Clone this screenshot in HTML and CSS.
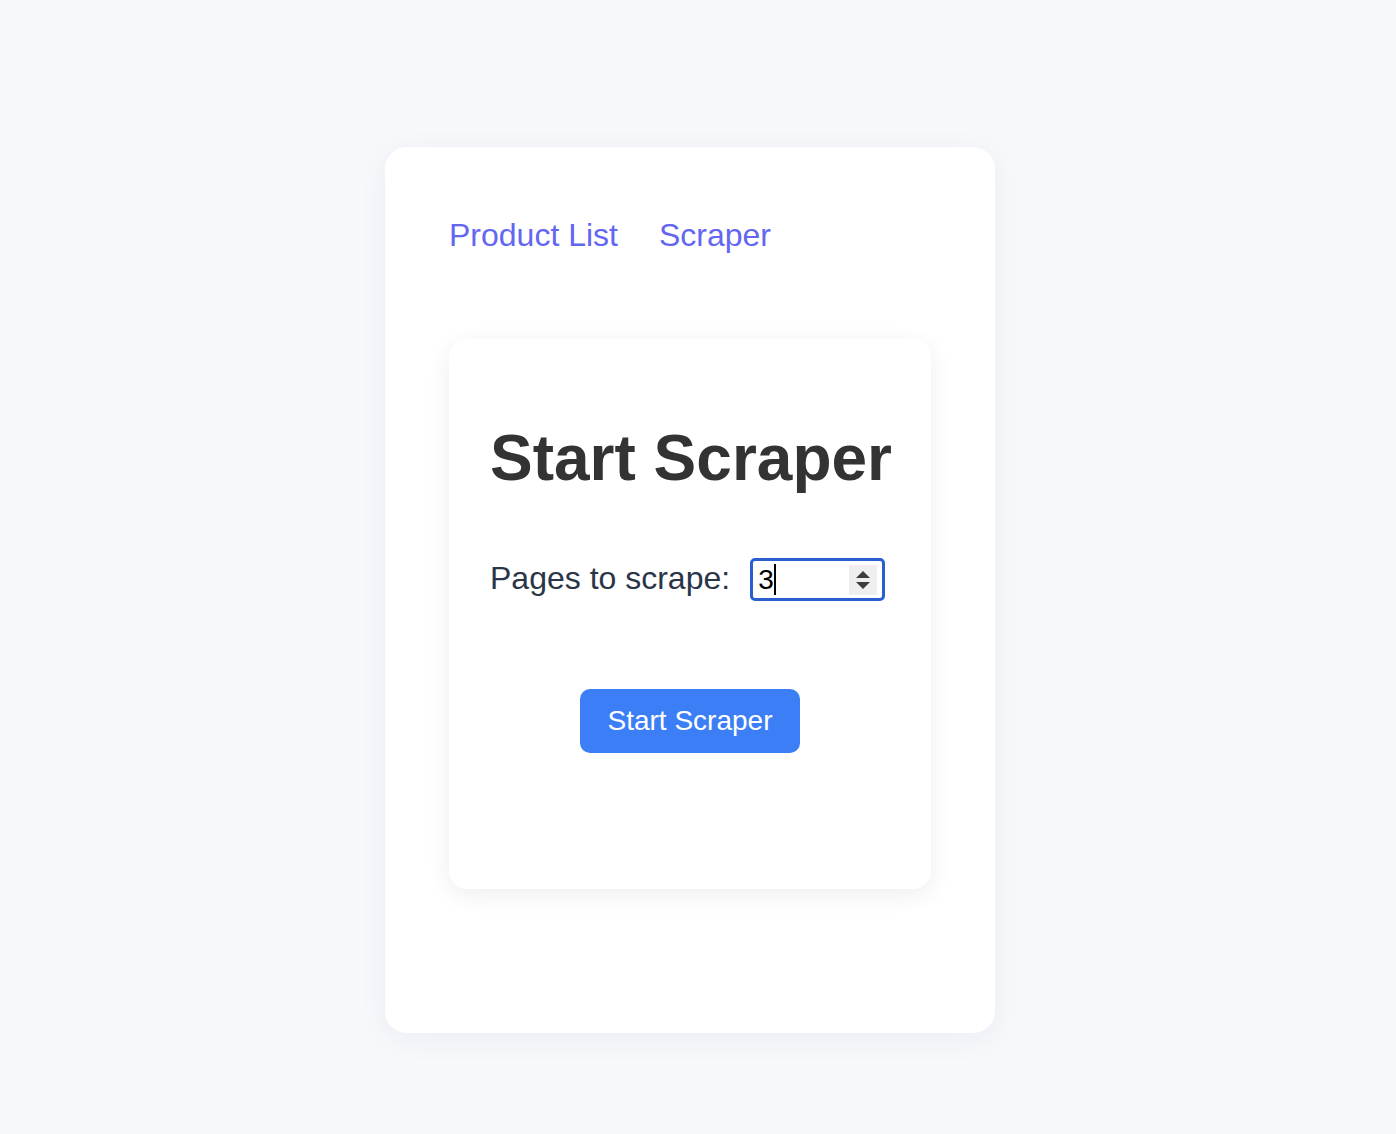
FILE: index.html
```html
<!DOCTYPE html>
<html lang="en">
<head>
<meta charset="utf-8">
<title>Scraper</title>
<link rel="stylesheet" href="styles.css">
</head>
<body>
<div class="page">
  <main class="shell">
    <nav class="nav">
      <a class="nav-link" href="#">Product List</a>
      <a class="nav-link" href="#">Scraper</a>
    </nav>
    <section class="panel">
      <h1 class="title">Start Scraper</h1>
      <div class="field">
        <label class="field-label">Pages to scrape:</label>
        <div class="num-input" role="spinbutton" aria-valuenow="3">
          <span class="num-value">3</span><span class="caret"></span>
          <span class="spinner">
            <svg width="18" height="26" viewBox="0 0 18 26"><path d="M9 4 L16 11 L2 11 Z" fill="#3c3c3c"/><path d="M2 15 L16 15 L9 22 Z" fill="#3c3c3c"/></svg>
          </span>
        </div>
      </div>
      <div class="actions">
        <button class="btn" type="button">Start Scraper</button>
      </div>
    </section>
  </main>
</div>
</body>
</html>
```

FILE: styles.css
```css
* { box-sizing: border-box; }
html, body { margin: 0; padding: 0; }
body {
  background: #f7f8fb;
  font-family: "Liberation Sans", Arial, Helvetica, sans-serif;
}
.page {
  display: flex;
  justify-content: center;
  padding: 147px 16px 101px 0;
}
.shell {
  width: 610px;
  background: #ffffff;
  border-radius: 22px;
  padding: 64px 64px 144px;
  box-shadow: 0 6px 30px rgba(30, 40, 90, 0.05);
}
.nav {
  display: flex;
  gap: 41px;
  padding-top: 6px;
  margin-bottom: 85px;
}
.nav-link {
  font-size: 32px;
  color: #6366f1;
  text-decoration: none;
  line-height: normal;
}
.panel {
  background: #ffffff;
  border-radius: 18px;
  padding: 40px 41px 136px;
  box-shadow: 0 6px 24px rgba(0, 0, 0, 0.07);
}
.title {
  margin: 42px 0 63px;
  font-size: 64px;
  font-weight: 700;
  color: #333333;
  line-height: normal;
  white-space: nowrap;
}
.field {
  display: flex;
  align-items: center;
  gap: 20px;
}
.field-label {
  font-size: 32px;
  color: #2a3547;
  line-height: normal;
  padding-bottom: 3px;
}
.num-input {
  width: 135px;
  height: 43px;
  border: 3px solid #2a5fcf;
  border-radius: 5px;
  display: flex;
  align-items: center;
  padding: 0 5px 0 5px;
  background: #fff;
}
.num-value {
  font-size: 28px;
  color: #000;
  line-height: 1;
}
.caret {
  width: 2px;
  height: 31px;
  background: #000;
}
.spinner {
  margin-left: auto;
  width: 28px;
  height: 30px;
  background: #efefef;
  display: flex;
  align-items: center;
  justify-content: center;
}
.actions {
  display: flex;
  justify-content: center;
  margin-top: 88px;
}
.btn {
  font-family: "Liberation Sans", Arial, Helvetica, sans-serif;
  font-size: 28px;
  line-height: 32px;
  color: #ffffff;
  background: #3b7ef6;
  border: none;
  border-radius: 10px;
  padding: 16px 28px;
  cursor: pointer;
}
```
